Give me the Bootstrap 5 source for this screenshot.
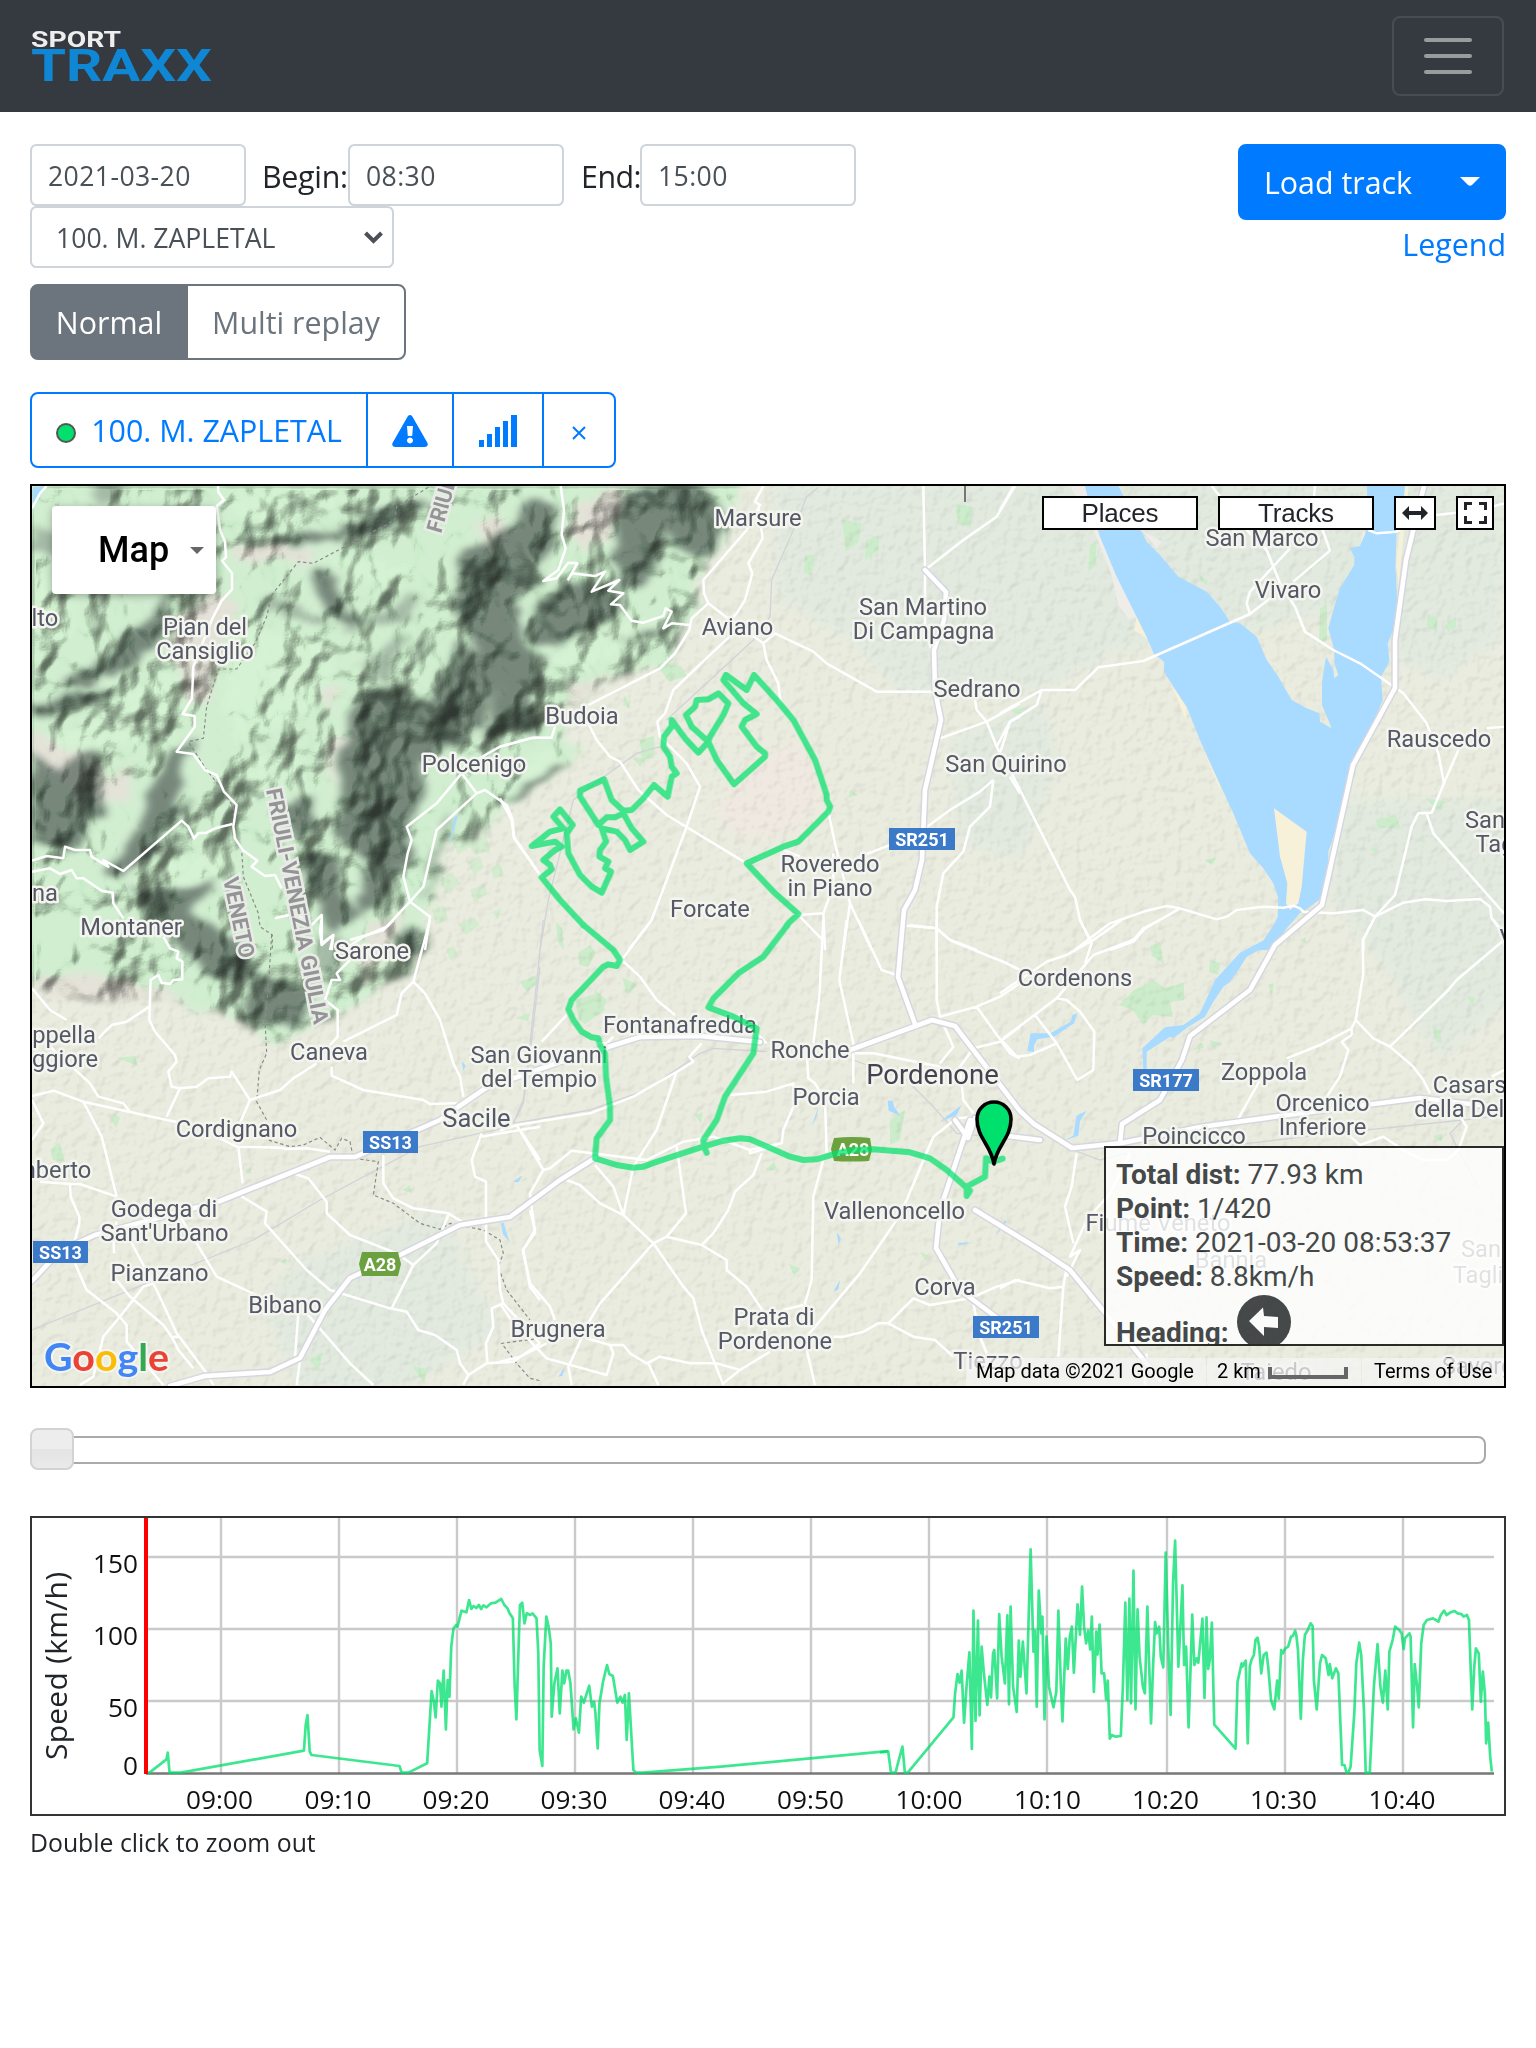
<!DOCTYPE html>
<html lang="en">
<head>
<meta charset="utf-8">
<meta name="viewport" content="width=device-width, initial-scale=1">
<title>SportTraxx - Track replay</title>
<link href="https://cdn.jsdelivr.net/npm/bootstrap@5.3.0/dist/css/bootstrap.min.css" rel="stylesheet">
<style>
:root{font-size:32px}
body{font-family:"Open Sans","Noto Sans",sans-serif;font-size:30.4px;line-height:48px;color:#212529;--bs-border-width:2px}
.topbar{background:#343a40;padding:16px 32px;height:112px}
.topbar .navbar-brand{padding:0;margin:0;line-height:0}
.topbar .navbar-brand svg{overflow:visible;position:relative;left:-1px}
.topbar .navbar-toggler{border:2px solid #484d52;padding:8px 24px;font-size:40px;line-height:1;border-radius:8px;height:80px}
.topbar .navbar-toggler-icon{display:block;width:60px;height:60px;background-image:url("data:image/svg+xml,%3csvg xmlns='http://www.w3.org/2000/svg' viewBox='0 0 30 30'%3e%3cpath stroke='%23999c9f' stroke-linecap='round' stroke-width='2' d='M4 7h22M4 15h22M4 23h22'/%3e%3c/svg%3e")}
.page{padding:32px 30px 0}
.form-control.tf,.form-select.tf{width:216px;height:62px;padding:9px 16px 7px;font-size:26.6px;line-height:42px;border:2px solid #ced4da;border-radius:6.4px;color:#495057;letter-spacing:.4px}
.form-select.tf{width:364px;padding-left:24px;letter-spacing:0;background-size:21px;background-position:right 8px center;background-image:url("data:image/svg+xml,%3csvg xmlns='http://www.w3.org/2000/svg' viewBox='0 0 21 14'%3e%3cpath d='M2.5 3l8 8 8-8' fill='none' stroke='%23495057' stroke-width='4'/%3e%3c/svg%3e")}
.lab-begin{width:102px;padding:3px 0 0 16px;white-space:nowrap;letter-spacing:-.3px}
.lab-end{width:76px;padding:3px 0 0 17px;white-space:nowrap;letter-spacing:-.5px}
.btn{--bs-btn-font-size:30.4px;--bs-btn-line-height:48px;--bs-btn-border-width:2px;--bs-btn-padding-x:0;--bs-btn-padding-y:12px;--bs-btn-border-radius:8px;height:76px;white-space:nowrap;padding-top:13px;padding-bottom:11px}
.btn-group>.btn{flex:none}
.btn-group>.btn:not(:first-child){margin-left:-2px}
.btn-primary{--bs-btn-bg:#007bff;--bs-btn-border-color:#007bff}
.btn-outline-primary{--bs-btn-color:#007bff;--bs-btn-border-color:#007bff}
.btn-secondary,.btn-outline-secondary{--bs-btn-border-color:#6c757d;--bs-btn-bg:#6c757d}
.btn-outline-secondary{--bs-btn-bg:#fff;--bs-btn-color:#6c757d}
.w-norm{width:158px}.w-multi{width:220px}.w-name{width:338px;letter-spacing:0}.w-warn{width:88px}.w-sig{width:92px}.w-x{width:74px}.w-load{width:200px}.w-split{width:70px}
.w-split svg{margin:-8px 2px 0 0}
.w-x svg{margin-top:-2px}
.dotmark{width:20px;height:20px;border-radius:50%;background:#00e06c;border:2px solid #555;display:inline-block;margin-right:15px;vertical-align:-1px}
.legendlink{color:#007bff;text-decoration:none;line-height:50px}
.mapbox{border:2px solid #000;height:904px;margin-top:16px;position:relative;overflow:hidden;background:#e8eadf}
.mapbox>svg{display:block}
.mtop{position:absolute;top:10px;right:10px;font-family:"Liberation Sans",Arial,sans-serif;font-size:26px;line-height:30px;color:#212529;letter-spacing:-.2px}
.mbtn{border:2px solid #000;background:#fff;height:34px;text-align:center;width:156px;margin-right:20px;display:flex;align-items:center;justify-content:center}
.mbtn.w-arr{width:42px}.mbtn.w-full{width:38px;margin-right:0}
.maptype{position:absolute;left:20px;top:20px;width:164px;height:88px;background:#fff;border-radius:4px;box-shadow:0 2px 8px rgba(0,0,0,.3);font:500 36px/88px Roboto,sans-serif;color:#000;padding-left:46px}
.maptype svg{margin-left:21px;vertical-align:8px}
.infobox{position:absolute;right:0;top:660px;width:400px;height:200px;border:2px solid #000;background:#fff;opacity:.82;overflow:hidden;padding:10px 0 0 10px;font:28px/34px Roboto,sans-serif;color:#212529;white-space:nowrap}
.infobox b{font-weight:700;letter-spacing:0}
.heading-ic{display:inline-block;vertical-align:-7px;margin-left:1px}
.mapfoot{position:absolute;right:0;bottom:0;height:28px;font:20px/27px Roboto,sans-serif;color:#000;white-space:nowrap}
.mapfoot>div{background:rgba(245,245,245,.72);height:28px}
.cp{width:240px;padding-left:10px}.sc{width:154px;padding-left:10px;margin:0 1px}.tu{width:142px;padding-left:12px}
.sc svg{margin-left:7px;vertical-align:-1px}
.slide{position:relative;height:28px;border:2px solid #aaa;border-radius:8px;margin:48px 20px 0 0}
.slide span{position:absolute;left:-2px;top:-10px;width:44px;height:42px;border:2px solid #d3d3d3;border-radius:8px;background:linear-gradient(#ededed 50%,#e4e4e4 51%,#eaeaea)}
.plot{border:2px solid #343438;height:300px;margin-top:52px}
.plot svg{display:block}
.hint{font-size:24.8px;line-height:38px;padding:7px 0 0 0}
.tl text{font-family:Roboto,sans-serif;font-size:23.7px;fill:#555866;stroke:#f4f5ee;stroke-width:5px;stroke-linejoin:round;paint-order:stroke;text-anchor:middle}
.reg text{font:700 22px Roboto,sans-serif;fill:#949497;stroke:#e9ece6;stroke-width:5px;paint-order:stroke}
.shield text{font:700 18px Roboto,sans-serif;fill:#fff;text-anchor:middle}
.rd path{fill:none;stroke:#fff;stroke-width:7.5;stroke-linejoin:round}
.mj{fill:none;stroke-linejoin:round;stroke-linecap:round}
.hillset{isolation:isolate}
.rail path{fill:none;stroke:#d2d3d8;stroke-width:4}
.brd path{fill:none;stroke:#8a8a8a;stroke-width:3.5;stroke-dasharray:10 8}
.axis text{font:26.2px "Open Sans",sans-serif;fill:#111}
</style>
</head>
<body>
<nav class="navbar topbar d-flex justify-content-between align-items-center">
  <a class="navbar-brand" href="#">
    <svg width="182" height="56" viewBox="0 0 182 56">
      <text x="0" y="19" font-family="Roboto,sans-serif" font-weight="700" font-size="21.500" fill="#eee" textLength="90" lengthAdjust="spacingAndGlyphs">SPORT</text>
      <text x="0" y="53" font-family="Roboto,sans-serif" font-weight="700" font-size="44" fill="#1087d4" textLength="181" lengthAdjust="spacingAndGlyphs">TRAXX</text>
    </svg>
  </a>
  <button class="navbar-toggler" type="button" aria-label="Toggle navigation"><span class="navbar-toggler-icon"></span></button>
</nav>

<main class="page">
  <div class="d-flex justify-content-between align-items-start">
    <div>
      <div class="d-flex align-items-center">
        <input class="form-control tf" value="2021-03-20"><span class="lab-begin">Begin:</span>
        <input class="form-control tf" value="08:30"><span class="lab-end">End:</span>
        <input class="form-control tf" value="15:00">
      </div>
      <select class="form-select tf"><option>100. M. ZAPLETAL</option></select>
      <div class="btn-group d-flex" style="margin-top:16px">
        <button class="btn btn-secondary w-norm">Normal</button>
        <button class="btn btn-outline-secondary w-multi">Multi replay</button>
      </div>
    </div>
    <div class="text-end">
      <div class="btn-group">
        <button class="btn btn-primary w-load">Load track</button>
        <button class="btn btn-primary w-split" aria-label="More"><svg width="20" height="9" viewBox="0 0 20 9"><path d="M0 0h20l-8 8q-2 1.5-4 0z" fill="#fff"/></svg></button>
      </div>
      <div><a class="legendlink d-block" href="#">Legend</a></div>
    </div>
  </div>

  <div class="btn-group d-flex" style="margin-top:32px">
    <button class="btn btn-outline-primary w-name"><span class="dotmark"></span>100. M. ZAPLETAL</button>
    <button class="btn btn-outline-primary w-warn" aria-label="Warnings"><svg class="d-block mx-auto" width="36" height="32" viewBox="0 0 36 32"><path fill="#007bff" fill-rule="evenodd" d="M15.8 1.2q2.2-2.4 4.4 0L35.5 28q1.200 3.500-2.500 4H3q-3.700-.5-2.500-4zM15 11l.8 10h4.400l.8-10zM18 22.500a3 3 0 1 0 .01 0z"/></svg></button>
    <button class="btn btn-outline-primary w-sig" aria-label="Signal"><svg class="d-block mx-auto" width="38" height="32" viewBox="0 0 38 32"><path fill="#007bff" d="M0 25h5v7H0zM8 19h5v13H8zM16 12h5v20h-5zM24 6h5v26h-5zM32 0h6v32h-6z"/></svg></button>
    <button class="btn btn-outline-primary w-x" aria-label="Remove"><svg width="14" height="14" viewBox="0 0 14 14"><path d="M1 1l12 12M13 1L1 13" stroke="#007bff" stroke-width="2"/></svg></button>
  </div>

  <div class="mapbox">
    <svg width="1472" height="900" viewBox="32 486 1472 900">
      <defs>
        <filter id="relief" x="0" y="0" width="100%" height="100%" color-interpolation-filters="sRGB">
          <feTurbulence type="fractalNoise" baseFrequency=".013 .010" numOctaves="4" seed="14"/>
          <feColorMatrix values="0 0 0 0 0 0 0 0 0 0 0 0 0 0 0 1 0 0 0 0"/>
          <feGaussianBlur stdDeviation="1.4"/>
          <feDiffuseLighting surfaceScale="42" diffuseConstant="1.15" lighting-color="#fff"><feDistantLight azimuth="225" elevation="54"/></feDiffuseLighting>
          <feComponentTransfer><feFuncR type="linear" slope=".33" intercept=".24"/><feFuncG type="linear" slope=".33" intercept=".24"/><feFuncB type="linear" slope=".33" intercept=".24"/></feComponentTransfer>
        </filter>
        <filter id="ridges" x="-10%" y="-10%" width="120%" height="120%" color-interpolation-filters="sRGB">
          <feTurbulence type="fractalNoise" baseFrequency=".022 .016" numOctaves="4" seed="5" result="n"/>
          <feDisplacementMap in="SourceGraphic" in2="n" scale="50" xChannelSelector="R" yChannelSelector="G"/>
          <feGaussianBlur stdDeviation="9"/>
        </filter>
        <filter id="grain" x="0" y="0" width="100%" height="100%" color-interpolation-filters="sRGB">
          <feTurbulence type="fractalNoise" baseFrequency=".1" numOctaves="2" seed="3"/>
          <feColorMatrix values="0 0 0 0 0 0 0 0 0 0 0 0 0 0 0 1 0 0 0 0"/>
          <feDiffuseLighting surfaceScale="1" diffuseConstant="1.25" lighting-color="#fff"><feDistantLight azimuth="225" elevation="53"/></feDiffuseLighting>
        </filter>
        <filter id="b6"><feGaussianBlur stdDeviation="6"/></filter>
        <mask id="hills"><path transform="translate(32 486) scale(.47193 .357143)" filter="url(#ridges)" fill="#fff" d="M-60 -60H1510L1475 160 1420 220 1415 320 1390 400 1340 500 1240 540 1160 600 1120 680 1165 740 1100 830 1020 890 990 920 930 1010 890 980 870 1060 845 1180 835 1290 790 1370 740 1410 690 1440 620 1500 500 1560 430 1490 330 1450 260 1430 150 1440 60 1430 -60 1400Z"/></mask>
      </defs>
      <rect x="32" y="486" width="1472" height="900" fill="#eaecdf"/>
      <g fill="#e2eadf" filter="url(#b6)">
        <path d="M770 480H1504V560L1500 640 1440 680 1400 660 1370 600 1220 640 1120 650 1040 690 900 690 850 640 780 600Z"/>
        <path d="M1340 800H1510V1000L1440 1060 1380 960 1330 900Z"/><path d="M950 740L1040 700 1060 760 1020 860 960 840ZM300 1260L440 1210 500 1330 400 1390 300 1390 260 1300Z"/>
      </g>
      <path d="M715 810L770 750 800 740 822 800 800 830 750 840 730 830Z" fill="#f0e9e1" filter="url(#b6)"/>
      <g fill="#cdeccb">
        <path opacity=".7" d="M450 835l15-8 5 14 16-6 4 16-14 4-6-8-12 8zM468 862l12-6 4 12-10 6zM440 880l12-8 8 12-14 10zM470 890l14-6 4 10-14 8zM432 910l12-5 4 14-12 6zM458 925l16-8 6 8-14 10zM490 868l10-5 4 12-10 4zM492 912l10-4-4 12zM446 950l8-4 4 10-8 4z"/>
        <path d="M520 982l15-6 4 6-12 10zM578 953l12-8 6 8-8 14-8-2zM556 922l6 6 2 22-6-8zM575 1000l20-6 10 16-20 14-6-4zM622 977l15 8-10 10zM595 990l12 10-6 14-8-10zM600 668l22-8 10 10-22 6zM655 662l26 4 6 10-18 6zM625 695l6 14-8-4zM640 740l14-4 0 22-12 2zM650 755l-10 12-6-8zM842 520l20 3-4 20-12 8zM870 545l10-8-10 25zM805 555l10 0-3 20-8-2zM955 504l18 3-3 20-12-3zM866 540l13-5 0 15-14 10zM850 790l8 5-10 3zM1090 545l6-3 0 20-8 10zM1196 573l12 8-2 5zM1320 608l7-3 0 35-8 5zM1427 614l10 3 0 15-10-5zM1445 625l11-8 0 10-8 5zM1376 820l20-5 5 14-24-2zM1010 710l15-3-5 8zM1370 850l10-5-4 8zM1205 860l12-3-5 8zM1425 798l22 4-10 8z"/>
        <path d="M1150 946l10-4 4 22-12-8zM1134 990l20-10 10 8 20-5 0 17-14 2 3 15-20-2-10 10-10-15-14-5zM1210 960l10 3-2 12-9-3zM1432 1025l8 5 2 14-6-3zM1268 985l6-2-2 12zM1192 1050l10-8 2 6zM1210 1040l12 4-10 4zM1400 870l4 3-4 5zM1300 940l6-3 0 7zM1465 995l10 3-2 8zM1434 1136l8-3 0 8-8-3zM890 1120l15-10-5 30-10 5zM695 1115l8-3-2 12zM765 1170l9-8 4 8zM800 1268l-6 8-5-12zM920 1252l8 3-2 6zM117 1058l18-2 3 10zM110 1118l5-4 5 4-4 10zM50 1150l10-8 5 20-12-2zM245 1173l6-6 0 7zM280 1262l6-4 0 7zM308 1360l15-8-4 18zM412 1366l15 3-3 14zM402 1190l8-5 2 8zM515 1018l15-5-2 8z"/>
      </g>
      <rect x="32" y="486" width="1472" height="900" filter="url(#grain)" style="mix-blend-mode:multiply" opacity=".34"/>
      <g mask="url(#hills)" class="hillset">
        <rect x="32" y="486" width="740" height="570" fill="#cbecca"/>
        <g transform="translate(32 486) scale(.47193 .357143)">
          <g fill="#e3ddd4" opacity=".9" filter="url(#ridges)"><path d="M300 370L380 300 440 330 410 400 380 600 340 620 300 500ZM430 160L600 180 580 215 430 205ZM950 110L990 80 1020 160 960 180ZM1150 60L1240 0 1250 110 1170 190 1130 130ZM610 560L660 560 620 660ZM620 700L670 700 640 860ZM0 690L130 760 160 830 210 780 200 880 100 880 0 750ZM0 1380L130 1360 250 1400 330 1440 200 1480 0 1480ZM1420 210L1480 180 1420 330ZM1140 560L1240 530 1120 660ZM700 1240L790 1180 770 1290 700 1400Z"/></g>
          <g fill="#44544a" opacity=".78" filter="url(#ridges)">
            <path d="M700 570L790 560 830 600 890 500 900 420 960 480 990 560 950 680 900 730 820 760 840 850 800 950 800 1050 740 1120 700 1050 650 980 650 860 660 760 665 650Z"/>
            <path d="M910 180L990 130 1060 30 1110 60 1100 160 1070 260 1020 320 1030 420 1090 500 1060 600 1080 690 960 700 990 560 920 400 890 330Z"/>
            <path d="M1090 300L1170 270 1260 290 1240 370 1150 420 1100 460 1050 410ZM1260 20L1400 -20 1470 80 1450 180 1390 200 1340 120 1330 230 1260 290 1230 200 1240 90Z"/>
            <path d="M560 130L640 130 760 50 850 40 740 130 600 165 470 170ZM60 560L130 500 300 300 300 400 200 520 120 560ZM0 610L100 580 180 585 60 640 0 650ZM0 740L60 790 140 730 150 900 90 1020 0 1000Z"/>
            <path d="M280 760L350 690 310 830 300 900 350 860 260 1020 200 1090 160 1080 230 950ZM200 1130L330 1130 400 1100 340 1190 430 1280 480 1370 400 1390 300 1280ZM570 1020L660 1030 650 1130 700 1200 640 1250 590 1150ZM470 1370L600 1400 570 1510 440 1500ZM1230 420L1350 400 1260 460ZM1000 880L1100 800 1150 770 1050 890ZM590 230L630 240 690 390 620 350ZM700 1080L780 1060 760 1150 700 1200ZM780 1260L830 1230 800 1350ZM520 900L600 860 600 960 560 1000Z"/>
          </g>
          <g fill="#657568" opacity=".5" filter="url(#ridges)"><path d="M0 120L100 140 50 200 0 180ZM130 -20L190 -20 180 50 140 50ZM480 300L600 360 640 400 500 360ZM700 500L760 420 800 440 740 560ZM620 1240L660 1280 640 1380 600 1350ZM660 400L760 340 820 300 800 380ZM820 1170L860 1000 890 900 900 940 870 1080Z"/></g>
          <g fill="#d3f3d1" opacity=".7" filter="url(#ridges)">
            <path d="M420 20L720 0 640 60 500 110 430 100ZM440 380L600 420 640 500 590 620 440 720 400 620ZM20 720L140 640 280 520 320 560 280 700 160 740ZM1080 500L1200 400 1330 380 1250 460 1170 520ZM440 800L540 720 580 800 500 880ZM260 1080L400 1010 430 1060 330 1120ZM620 200L800 220 780 290 700 260ZM0 240L100 300 80 420 0 480ZM660 1350L740 1330 730 1390ZM1010 790L1100 730 1120 770 1040 830Z"/>
          </g>
        </g>
        <rect x="32" y="486" width="740" height="570" filter="url(#relief)" style="mix-blend-mode:hard-light"/>
      </g>
      <path d="M33 487h13L33 508z" fill="#a9daff"/>
      <!-- braided river beds -->
      <g transform="translate(1000 470) scale(.333333)">
        <path fill="#f6f1da" d="M410 440l-8 40 40 28zM500 610l58 100 0 40zM610 840l50 120 0-20-40-80zM1090 180l-10 55 33 7zM1212 48h14l-30 300-8-60z"/>
        <path fill="#efedea" d="M210 48h50l20 60 65 190 65 142-25 6-30-40-20-90-60-150zM425 180l60 35-15 20z"/>
        <path fill="#a9daff" d="M255 48H355L370 78 422 180 440 215 480 255 535 320 620 365 660 410 690 455 720 460 770 500 800 570 835 620 875 690 920 715 958 730 960 755 995 775 966 705 966 635 978 560 1000 600 1003 625 1015 615 1003 580 1003 540 985 475 1000 420 1020 355 1063 285 1063 260 1050 235 1080 228 1100 180 1110 180 1100 48H1215L1212 80 1190 180 1186 290 1194 435 1180 480 1163 520 1168 575 1143 620 1148 690 1115 770 1070 850 1055 900 1040 960 1010 1070 985 1145 983 1250 970 1280 930 1310 900 1330 860 1375 830 1420 815 1440H738L790 1412 815 1380 833 1340 835 1285 820 1240 790 1195 750 1150 700 1030 640 900 600 810 560 710 520 650 492 605 492 575 462 552 440 500 410 440 350 320 300 200 270 110Z"/>
        <path fill="#f8f1da" d="M822 1015L920 1085 905 1250 895 1300 870 1320 858 1300 862 1240 840 1160Z"/>
      </g>
      <g fill="#a9daff">
        <path transform="translate(1000 920) scale(.333333)" d="M868 0L835 45 795 80 740 110 715 150 690 185 670 200 640 245 615 290 565 320 520 355 510 350 440 395 440 450 430 450 427 385 495 322 550 315 600 280 645 180 720 98 790 62 815 25 830 0ZM92 340h60l60-35 5-20 15-5-10 30-60 40-50 8-10 18 0 20-20-3zM190 662l30-15 10-60 30-15-20 30-5 45zM450 430l60 20z"/>
        <path transform="translate(500 920) scale(.333333)" d="M1163 542h15l5 20 18 25-35-15zM1320 605l65-50-15 30zM1375 968h45l-45 8zM1485 950l30-50 5 5zM1000 1115l20-35-5 28zM1010 935l12 20-6 20zM0 905l30 60-20-20zM935 620l20-60-5 30zM40 785l28-18-12 18zM175 1370l20-30-8 28z"/>
        <path transform="translate(20 920) scale(.333333)" d="M1325 422l12 15-7 15zM1480 785l25-18-12 20zM1443 908h8l18 65z"/>
        <path d="M454 818l4-3-9 32z"/>
      </g>
      <!-- railways -->
      <g class="rail">
        <g transform="translate(20 920) scale(.333333)"><path d="M36 1230L380 1090 700 960 900 840 1200 680 1560 600M1560 140L1530 400 1510 550 1480 610"/></g>
        <g transform="translate(500 470) scale(.333333)"><path d="M955 52L920 80 880 180 815 330 810 440 760 510 500 750M480 830L410 850 312 920 220 990 170 1190 145 1290 120 1440"/></g>
        <g transform="translate(500 920) scale(.333333)"><path d="M130 0L90 370 70 540 40 610M40 610L270 570 440 510 600 400 640 385 800 395M1060 420L1220 480 1300 560 1370 640 1560 660"/></g>
        <g transform="translate(1000 920) scale(.333333)"><path d="M220 690L300 720 380 700M660 680L1000 640 1390 600 1560 580M1390 600L1350 640 1380 700 1440 810"/></g>
      </g>
      <!-- administrative boundaries -->
      <g class="brd">
        <g transform="translate(20 470) scale(.333333)"><path d="M1225 52L1130 110 1125 150 880 280 835 275 755 375 740 440 705 520 650 597 595 597 560 710 550 805 505 815 560 900 600 950 640 1010 640 1090 665 1140 670 1220 715 1330 720 1370 757 1395V1440"/></g>
        <g transform="translate(20 920) scale(.333333)"><path d="M755 45L745 200 735 300 740 400 718 450 710 545 740 600 745 660 810 680 850 675 900 652 945 690 965 655 990 665 1000 715 1075 725 1060 825 1120 850 1200 910 1260 928 1290 910 1390 930 1440 960 1450 1000 1435 1040 1460 1110 1530 1200M1560 1255L1445 1270 1490 1330 1530 1375 1560 1382"/></g>
      </g>
      <!-- local roads -->
      <g class="rd">
        <g transform="translate(20 470) scale(.333333)">
          <path d="M594 48L595 66 612 90 590 108 600 180 615 215 618 262 606 272 636 310 636 358 605 392 575 450 520 590 516 685 488 732 524 738 524 770 470 845 520 852 555 900 590 915 612 965 650 1005 640 1070 645 1105 668 1140 712 1172 695 1190 735 1218 765 1215 785 1255"/>
          <path d="M36 1172L80 1158 130 1165 135 1130 165 1140 210 1140 215 1160 265 1190 250 1170 310 1203 485 1052 505 1070 522 1105 535 1090 560 1088 585 1075 638 1062M36 1205L90 1195 120 1212 155 1200 170 1225 190 1225 245 1262 278 1268 280 1300 310 1345M36 115L60 70 80 48"/>
          <path d="M1325 910L1250 1000 1160 1070 1175 1110 1163 1150 1150 1220 1170 1295 1100 1370 1030 1400 970 1440M1325 910L1370 970 1250 1080 1210 1250 1170 1295 1230 1340 1215 1440M1370 970L1395 960 1460 1005 1478 1050 1482 1100 1560 1215M1370 870L1440 830 1530 805 1560 803M765 1345L830 1330 870 1370 905 1335 905 1420 940 1395 930 1440"/>
        </g>
        <g transform="translate(500 470) scale(.333333)">
          <path d="M182 48L192 120 185 195 197 235 175 300 130 333 170 325 205 278 232 280 205 328 215 310 285 318 315 305 275 365 358 330 325 362 370 370 333 403 360 405 395 452 430 458 490 438 497 415 515 425 490 475 515 460 570 465"/>
          <path d="M790 48L765 95 780 105 740 180 610 330 612 370 625 400 575 445 568 480 525 550 480 595 265 705M775 110L788 205 745 280 757 310 735 390 710 430 690 450 790 520 825 490 940 545 980 580 1130 665 1300 665M625 400L690 450M700 490L640 545 520 660 495 730 472 755 480 800 560 880 600 950 560 1070 455 1350 385 1440M790 520L800 570 835 640 842 700M265 760L290 810 330 860 360 875 415 960 500 1035 740 1180M165 770L155 803 100 803 0 830M0 985L35 1050 42 1105 125 1222M985 1025L1005 1120 1050 1300 1115 1440M895 1335L970 1330 975 1440M900 1340L968 1410M1050 1300L1030 1440M1000 1150L1000 1250 970 1330M1080 1160L1170 1125M850 1140L900 1160"/>
          <path d="M1270 48L1275 300M1545 48L1490 140 1390 210 1275 300M1275 300V470L1300 560M1560 700L1460 755 1320 805M1425 690L1430 720 1460 755 1490 830 1530 755 1560 740M1490 830L1500 850M1480 930L1470 1010 1410 1070 1390 1145 1330 1210 1310 1310 1310 1440M1480 930L1440 965 1350 1020 1275 1075M1530 920L1560 970M1220 1367L1310 1375 1350 1410 1430 1440"/>
        </g>
        <g transform="translate(1000 470) scale(.333333)">
          <path d="M0 730L125 660 225 660 295 592 430 573 750 432 810 385M125 660L110 705 30 755 0 850M0 120L40 50M635 48L740 180 800 240 840 340 885 410 915 485 1000 540 1080 580 1210 670 1280 760 1315 850 1332 940M945 48L940 100 975 200 990 242 880 335M870 235L750 365 740 400 750 432M1105 180L1130 190 1190 185 1240 150 1310 135 1440 120 1512 100M1375 840L1332 940 1295 1028 1255 1030 1235 1070 1185 1275 1125 1340 1090 1410V1440M1280 1030L1300 1090 1512 1330M1512 770L1460 775"/>
          <path d="M35 910L210 1260 225 1280 240 1350 275 1420M225 1440L270 1405 330 1360 440 1322 500 1308 540 1315 650 1348 680 1340 710 1320 790 1310 850 1313 880 1307 900 1315 910 1325 1000 1330 1090 1320 1125 1340 1210 1298 1275 1288 1340 1293 1440 1287 1470 1310 1475 1345 1512 1390M540 1315L435 1375 400 1415 330 1440"/>
        </g>
        <g transform="translate(20 920) scale(.333333)">
          <path d="M430 50L450 85 475 95 470 115 487 125 487 178 460 180 450 192 425 188 415 165 392 180 388 300 405 335 465 405 470 425 445 455 455 500 480 505 530 500 565 475 630 470 635 455 690 540 655 620M480 505L440 590M36 205L90 270 140 300M388 260L320 305 275 315 235 355M90 380L210 490 235 530 310 550 330 575M36 528L100 512 190 545 440 600 490 610M190 545L245 650 290 830M36 540L70 610 36 660M60 785L150 792 180 792 290 830M150 792L152 830 178 890 178 910 165 960M290 905L280 940 282 1000M165 1030L200 1110 290 1180 320 1215V1265L430 1395M330 960L410 1110 470 1240 560 1360 580 1395M400 1090L370 1100 300 1190 250 1250 220 1370 180 1395M290 1080L330 1130 430 1215 455 1250 475 1290 520 1345M460 1250H480M480 890L530 970 590 1070 720 1130M860 1180L990 1330 1060 1395M835 1180L825 1310M840 1320L830 1395"/>
          <path d="M650 820L740 875 735 910 860 1050 930 1110 1110 1165 1160 1175 1195 1230 1245 1245 1310 1290 1320 1330 1345 1365 1400 1330 1480 1325 1560 1270M820 760L865 775 920 845V880L990 945 1130 1000 1180 1035 1250 970 1285 885M1180 1035L1115 1165M600 655L650 680 780 683 800 687 860 685 930 695M655 680L668 790M690 540L780 510 820 475 890 430M935 440V467L1030 510 1210 540 1230 552 1310 550M970 365L1130 285 1145 220 1180 185 1230 0M1180 185L1215 220 1260 300 1300 430 1320 470 1330 530M930 375L953 350V270L915 240 935 180 960 180 950 160 990 120M1120 0L1090 30 990 60M905 0L900 30 905 75 940 45 935 90"/>
          <path d="M1090 705V790L1120 835 1180 865 1285 880 1350 920M1385 640L1355 720 1365 770 1398 785V965L1435 1020 1440 1110 1450 1150 1560 1270M1450 1150L1415 1165 1420 1220 1398 1270 1402 1328M1500 630L1560 720M1530 870L1545 930 1510 990 1530 1100 1560 1140M1330 1395L1345 1365M1385 650L1440 640 1560 620"/>
        </g>
        <g transform="translate(500 920) scale(.333333)">
          <path d="M455 0L365 120 420 170 470 240 525 285M200 285L125 365M0 632L50 615 270 580 400 530 540 450 580 425 568 410 605 370M530 455L470 630 400 740 370 885M290 370H320L340 350M50 615L130 750 150 745 215 692 440 720 480 700 550 665 640 650 750 690 845 670 850 630 880 560 880 490 800 515 690 525M130 750L90 820 105 940 68 990 90 1090 150 1160 165 1200M285 735L340 800 370 885 460 970 550 1100 580 1135 605 1230 670 1395M200 780L240 795 300 850 370 885M460 970L300 1150 270 1200 205 1340 215 1395M530 680L558 880 500 950 460 970M500 950L605 975 680 1020V1050L740 1100 800 1190M605 975L640 940 685 870 705 815 760 765 785 700M970 720L940 830 935 1080 915 1150 910 1200M920 1290L945 1395M970 0L958 230 940 370M920 400L925 475 945 490 975 540 980 700M1040 0L1018 180 1060 370V490M1075 0L1145 150 1190 165M1310 0V240L1320 290 1430 260 1500 230 1560 190M1430 260L1530 400 1560 415M1320 290L1360 380 1320 430M1560 320L1500 365 1420 385 1380 440 1390 540 1420 580M1065 400L1120 400 1320 440M740 310L800 370"/>
          <path d="M920 1250L1080 1060 1190 900 1220 840 1300 650 1370 595 1440 590M1000 1250H1030L1090 1235 1135 1210H1165L1240 1135 1290 1155 1410 1135 1490 1100 1560 1080M1165 1210L1240 1250 1305 1260 1360 1310M1420 1150L1440 1250 1460 1300M0 1150L40 1210 140 1315 320 1365 340 1300 330 1275H370L390 1300 440 1330 480 1310 570 1330 650 1330 720 1350M0 1325L60 1310 140 1270M260 1255L330 1275M445 1330L475 1395M670 1390L720 1350 810 1295M750 690V700L830 675M850 1170L910 1155M1230 15L1310 25 1350 60 1520 130 1560 150"/>
        </g>
        <g transform="translate(1000 920) scale(.333333)">
          <path d="M240 0L275 70 255 130M365 0L280 60 200 105 140 125 0 220M480 0L430 25 400 60 280 105 170 235 10 355M0 120L50 145M0 355L50 410 90 405 170 370M105 285L170 370 232 480 280 450 283 335 240 275 200 240 170 235M1120 0L1088 60 1090 160 1067 300 1055 325 960 375 860 415M1067 300L1120 355 1170 380 1240 440 1270 480 1290 520M1170 380L1345 210 1370 180 1512 60M1480 0L1512 45M1055 345L1025 365 1045 390 1020 470 980 530M1055 325V345M780 480L710 605M1040 640L1080 675 1150 650 1210 690 1270 720 1340 720 1375 690 1400 620 1380 590M1512 450L1475 470M230 700L215 800 195 860 220 970M0 1105L45 1080 150 1105 190 1100 200 1040M190 1100L175 1310M390 700L330 820 260 900 210 1010 240 990 200 1070M440 1300L435 1395"/>
        </g>
      </g>
      <!-- trunk roads, casing below and surface above -->
      <defs><g id="trunk">
        <path d="M32 1281L60 1251 95 1235 220 1201 330 1157 355 1157 440 1120 458 1107 486 1088 560 1062 640 1037 700 1036 760 1042M850 1050L932 1020 955 1026 1020 1111 1034 1124 1072 1148 1122 1143 1200 1127 1280 1116 1420 1098 1504 1108"/>
        <path d="M925 570L946 592 944 620 934 650 935 690 941 720 925 790 922 860 915 890 904 910 898 977 915 1024M970 1120L960 1150 940 1210 936 1248 960 1290 1000 1320"/>
        <path d="M1424 486L1406 560 1395 640 1395 688 1353 765 1322 905 1275 945 1250 990 1190 1036 1182 1060 1160 1100 1122 1124 1120 1143M1000 1135L1040 1140M975 1210L1040 1250 1070 1270 1160 1380"/>
        <path d="M170 1386L205 1376 270 1372 300 1358 325 1310 350 1278 400 1255 460 1225 510 1217 560 1180 595 1158"/>
        <path d="M955 1120L968 1138 975 1118"/>
      </g></defs>
      <g class="mj"><use href="#trunk" stroke="#d6d6df" stroke-width="7.500"/><use href="#trunk" stroke="#fff" stroke-width="4.600"/></g>
      <path d="M965 486v16" stroke="#777" stroke-width="2"/>
      <!-- region names -->
      <g class="reg">
        <text transform="translate(441 534) rotate(-74)" textLength="62">FRIULI</text>
        <text transform="translate(266 790) rotate(78.500)" textLength="240" lengthAdjust="spacingAndGlyphs">FRIULI-VENEZIA GIULIA</text>
        <text transform="translate(223 879) rotate(78)" textLength="82" lengthAdjust="spacingAndGlyphs">VENETO</text>
      </g>
      <g class="shield">
        <g fill="#3b79c9"><path d="M889 828h66v22h-66zM363 1131h55v22h-55zM33 1241h55v22h-55zM973 1316h66v22h-66zM1133 1069h66v22h-66z"/></g>
        <path fill="#6ba13e" d="M362 1252h36l3 12-3 12h-36l-3-12zM834 1138q19-2 36 0l2 12-3 11q-18 1-35 0l-3-12z"/>
        <text x="922" y="845.500">SR251</text><text x="390.500" y="1148.500">SS13</text><text x="60.500" y="1258.500">SS13</text><text x="1006" y="1333.500">SR251</text><text x="1166" y="1086.500">SR177</text><text x="380" y="1270.500">A28</text><text x="853" y="1155.500">A28</text>
      </g>
      <g class="tl">
        <text x="758" y="525.500">Marsure</text><text x="737.500" y="635">Aviano</text><text x="923" y="615">San Martino</text><text x="923.500" y="639">Di Campagna</text><text x="977" y="697">Sedrano</text><text x="1006" y="771.500">San Quirino</text><text x="582" y="723.500">Budoia</text><text x="474" y="771.500">Polcenigo</text><text x="205" y="634.500">Pian del</text><text x="205" y="658.500">Cansiglio</text><text x="45" y="626">lto</text><text x="45" y="901">na</text><text x="131" y="934.500">Montaner</text><text x="372" y="958.500">Sarone</text><text x="830" y="872">Roveredo</text><text x="830" y="896">in Piano</text><text x="710" y="917">Forcate</text>
        <text x="1262" y="545.500">San Marco</text><text x="1288" y="597.500">Vivaro</text><text x="1439" y="746.500">Rauscedo</text><text x="1485" y="827.500">San</text><text x="1495" y="852">Tag</text><text x="1507" y="946">V</text>
        <text x="1075" y="985.500">Cordenons</text><text x="1264" y="1080">Zoppola</text><text x="1322.500" y="1111">Orcenico</text><text x="1322.500" y="1135">Inferiore</text><text x="1476" y="1092.500">Casarsa</text><text x="1468" y="1117">della Deliz</text><text x="1194" y="1144">Poincicco</text><text x="1158" y="1231">Fiume Veneto</text><text x="1231" y="1268">Bannia</text><text x="1481" y="1257">San</text><text x="1478" y="1283">Tagli</text><text x="1276" y="1380">Taiedo</text><text x="1478" y="1374">Savorg</text>
        <text x="680" y="1033" textLength="154">Fontanafredda</text><text x="810" y="1057.500">Ronche</text><text x="826" y="1105">Porcia</text><text x="539" y="1063">San Giovanni</text><text x="539" y="1087">del Tempio</text><text x="894.500" y="1218.500">Vallenoncello</text><text x="945" y="1294.500">Corva</text><text x="774" y="1325">Prata di</text><text x="775" y="1349">Pordenone</text><text x="558" y="1337">Brugnera</text><text x="988" y="1369">Tiezzo</text>
        <text x="329" y="1059.500">Caneva</text><text x="236.500" y="1136.500">Cordignano</text><text x="64" y="1043">ppella</text><text x="65" y="1067">ggiore</text><text x="57" y="1178">nberto</text><text x="164" y="1217">Godega di</text><text x="164.500" y="1241">Sant'Urbano</text><text x="159.500" y="1280.500">Pianzano</text><text x="285" y="1313">Bibano</text>
        <text x="476.500" y="1127" style="font-size:25.500px">Sacile</text><text x="932.500" y="1083.500" style="font-size:27.500px;fill:#45434f">Pordenone</text>
      </g>
      <!-- replayed track -->
      <g fill="none" stroke="#00e06c" stroke-width="18" stroke-linejoin="round" stroke-linecap="round" opacity=".72">
        <path transform="translate(500 470) scale(.333333)" d="M250 1365L180 1290 125 1222 155 1198 150 1185 130 1170 165 1140 185 1130 165 1115 95 1128 150 1085 190 1075 160 1040 180 1018 218 1065 200 1090 205 1150 240 1215 275 1250 305 1268 333 1205 315 1195 325 1175 298 1160 300 1140 318 1115 305 1075 350 1085 375 1110 390 1140 430 1115 395 1075 370 1030 345 1042 320 1042 295 1065 240 980 240 962 312 928 335 990 370 1022 395 1020 430 985 462 945 503 980 515 920 530 910 515 890 510 860 490 830 492 800 515 770 515 750 555 805 595 848 625 815 630 800 670 735 685 700 655 670 625 688 590 690 585 710 558 735 575 770 625 815 650 870 702 943 795 860 795 850 770 830 725 770 735 750 770 732 730 700 670 630 678 615 740 660 762 615 830 690 880 750 945 870 980 975 980 990 990 1010 985 1025 945 1065 895 1115 850 1130 740 1180 820 1265 895 1332 865 1360 860 1368"/>
        <path transform="translate(500 920) scale(.333333)" d="M250 15L340 90 360 120 350 138 325 133 310 140 215 240 205 268 220 300 245 335 275 352 295 355 300 375 315 400 318 470 330 560 330 600 290 655 285 715 350 735 400 743 430 740 480 722 600 683 670 662 720 655 750 658 790 675 870 710 910 720 950 718 1010 700 1060 690 1120 688 1230 697 1290 715 1340 750 1410 812 1400 828 1400 800 1455 770 1458 715 1480 725 1508 716M860 18L790 110 715 160 640 235 625 262 700 290 770 325 760 400 675 530 650 600 610 660 612 680 620 698"/>
      </g>
      <path d="M994 1164C991 1145 977 1138 977 1119A17 17 0 0 1 1011 1119C1011 1138 997 1145 994 1164Z" fill="#00e06c" stroke="#000" stroke-width="3.600" stroke-linejoin="round"/>
      <text x="44" y="1371" font-family="Lato,sans-serif" font-weight="700" font-size="38" textLength="125" lengthAdjust="spacingAndGlyphs" stroke-width="4" style="paint-order:stroke"><tspan fill="#4285f4" stroke="#f4f5f0">G</tspan><tspan fill="#ea4335" stroke="#f4f5f0">o</tspan><tspan fill="#fbbc05" stroke="#f4f5f0">o</tspan><tspan fill="#4285f4" stroke="#f4f5f0">g</tspan><tspan fill="#34a853" stroke="#f4f5f0">l</tspan><tspan fill="#ea4335" stroke="#f4f5f0">e</tspan></text>
    </svg>
    <div class="maptype">Map<svg width="14" height="7" viewBox="0 0 14 7"><path d="M0 0h14L7 7z" fill="#666"/></svg></div>
    <div class="mtop d-flex">
      <div class="mbtn">Places</div><div class="mbtn">Tracks</div>
      <div class="mbtn w-arr"><svg width="26" height="14" viewBox="0 0 26 14"><path fill="#212529" d="M0 7L7 0v5h12V0l7 7-7 7V9H7v5z"/></svg></div>
      <div class="mbtn w-full"><svg width="23" height="22" viewBox="0 0 23 22"><path d="M1.500 8V1.500H8M15 1.500h6.500V8M21.500 14v6.500H15M8 20.500H1.500V14" fill="none" stroke="#212529" stroke-width="3"/></svg></div>
    </div>
    <div class="infobox">
      <div><b>Total dist:</b> 77.93 km</div><div><b>Point:</b> 1/420</div><div><b>Time:</b> 2021-03-20 08:53:37</div><div><b>Speed:</b> 8.8km/h</div>
      <div style="padding-top:1px"><b>Heading:</b> <svg class="heading-ic" width="54" height="54" viewBox="0 0 54 54"><circle cx="27" cy="27" r="27" fill="#212529"/><path d="M12 26L26 12.500 27 21 41 22V33L27 32 27 41Z" fill="#fff"/></svg></div>
    </div>
    <div class="mapfoot d-flex">
      <div class="cp">Map data ©2021 Google</div>
      <div class="sc">2 km<svg width="80" height="12" viewBox="0 0 80 12"><path d="M2 0v10h76V0" fill="none" stroke="#666" stroke-width="4"/></svg></div>
      <div class="tu">Terms of Use</div>
    </div>
  </div>

  <div class="slide"><span></span></div>

  <div class="plot">
    <svg width="1472" height="296" viewBox="32 1518 1472 296">
      <path d="M221 1518V1773M339 1518V1773M457 1518V1773M575 1518V1773M693 1518V1773M811 1518V1773M929 1518V1773M1047 1518V1773M1167 1518V1773M1285 1518V1773M1403 1518V1773M146 1557H1494M146 1629H1494M146 1701H1494" stroke="#808080" stroke-opacity=".42" stroke-width="2.400" fill="none"/>
      <path d="M146 1773.500H1494" stroke="#777" stroke-width="2.600"/>
      <g fill="none" stroke="#00e06c" stroke-opacity=".76" stroke-width="2.700" stroke-linejoin="round">
        <path vector-effect="non-scaling-stroke" transform="translate(20 1400) scale(.446429 .333333)" d="M284 1118H290L328 1078 331 1058 335 1118H360L636 1052 640 975 644 945 649 1055 653 1065 850 1098 855 1118H870L912 1090 918 960 922 873 927 905 931 952 936 842 941 850 944 920 949 812 954 988 958 840 962 890 966 740 971 685 977 675 980 680 989 632 1000 637 1006 600 1011 627 1016 618 1022 624 1028 615 1033 627 1038 616 1045 622 1055 610 1065 608 1078 597 1085 615 1092 625 1096 638 1104 655 1108 858 1112 958 1118 690 1120 615 1125 608 1130 670 1135 640 1143 645 1148 640 1157 655 1161 760 1164 1050 1170 1098 1173 800 1179 650 1184 680 1189 730 1191 950 1197 850 1204 805 1209 940 1215 812 1219 850 1224 812 1228 812 1233 850 1240 988 1245 955 1252 998 1257 890 1263 908 1275 857 1281 920 1286 905 1289 940 1294 1045 1298 910 1306 845 1315 795 1320 822 1328 828 1338 908 1345 890 1350 908 1355 885 1359 1020 1364 880 1374 1110 1380 1118H1395L1570 1100 1944 1053.500"/>
        <path vector-effect="non-scaling-stroke" transform="translate(880 1500) scale(.408163 .333333)" d="M0 757L20 754 24 790 27 818H38L46 780 55 740 61 818H68L180 652 184 580 190 522 195 548 200 512 206 668 212 560 219 457 225 747 229 332 234 663 240 362 244 646 249 440 255 525 263 615 268 530 272 592 277 460 280 450 287 595 292 342 298 470 306 550 312 346 316 613 320 320 326 560 335 636 340 422 344 530 350 425 359 580 369 148 376 455 380 392 384 620 389 272 395 400 398 350 403 658 408 410 414 560 425 622 432 575 437 332 443 550 447 664 455 416 460 507 465 410 470 380 475 518 484 313 490 404 495 260 500 380 505 430 510 392 515 448 519 350 524 576 530 395 533 463 538 374 543 520 549 520 554 598 558 542 563 716 568 705 577 710 590 708 595 560 601 308 606 600 611 296 615 610 621 212 626 628 631 328 636 470 644 560 649 580 655 320 664 670 669 500 674 366 678 400 684 380 688 470 694 502 700 158 706 430 712 645 718 250 723 122 731 500 741 256 745 495 750 440 756 682 761 500 765 344 770 495 776 475 780 488 790 356 795 594 800 352 804 507 808 480 813 368 819 674 871 746 876 545 886 490 888 500 896 482 901 730 906 500 910 480 916 465 920 420 925 413 929 440 934 520 940 465 947 458 951 500 958 600 966 628 973 542 977 596 983 450 987 460 993 445 1000 440 1007 410 1012 407 1017 392 1020 405 1024 450 1031 656 1036 480 1041 405 1048 390 1055 370 1060 378 1063 540 1070 628 1078 490 1083 465 1092 475 1099 525 1102 492 1108 535 1117 505 1123 520 1130 730 1132 795 1138 795 1143 818H1147L1153 800 1162 640 1167 490 1174 428 1179 465 1186 640 1190 818H1200L1210 560 1219 432 1226 560 1232 608 1238 512 1244 628 1248 455 1256 420 1262 380 1272 390 1278 400 1283 447 1286 415 1297 400 1300 410 1306 682 1310 492 1316 560 1320 622 1326 430 1332 375 1340 360 1355 355 1368 365 1374 345 1382 332 1388 345 1398 337 1408 333 1415 340 1424 342 1430 350 1438 345 1443 360 1447 500 1451 628 1456 500 1460 445 1467 460 1472 605 1477 515 1482 580 1485 730 1490 668 1495 770 1499 815"/>
      </g>
      <path d="M146 1518V1774" stroke="#f00" stroke-width="4"/>
      <g class="axis">
        <g text-anchor="end"><text x="138" y="1573">150</text><text x="138" y="1645">100</text><text x="138" y="1717">50</text><text x="138" y="1775">0</text></g>
        <g text-anchor="middle"><text x="219.500" y="1809">09:00</text><text x="338" y="1809">09:10</text><text x="456" y="1809">09:20</text><text x="574" y="1809">09:30</text><text x="692" y="1809">09:40</text><text x="810.500" y="1809">09:50</text><text x="929" y="1809">10:00</text><text x="1047.500" y="1809">10:10</text><text x="1165.500" y="1809">10:20</text><text x="1283.500" y="1809">10:30</text><text x="1402" y="1809">10:40</text></g>
      </g>
      <text transform="translate(67 1760) rotate(-90)" font-family="Open Sans,sans-serif" font-size="30" fill="#212529" textLength="188">Speed (km/h)</text>
    </svg>
  </div>
  <div class="hint">Double click to zoom out</div>
</main>
<script src="https://cdn.jsdelivr.net/npm/bootstrap@5.3.0/dist/js/bootstrap.bundle.min.js"></script>
</body>
</html>
